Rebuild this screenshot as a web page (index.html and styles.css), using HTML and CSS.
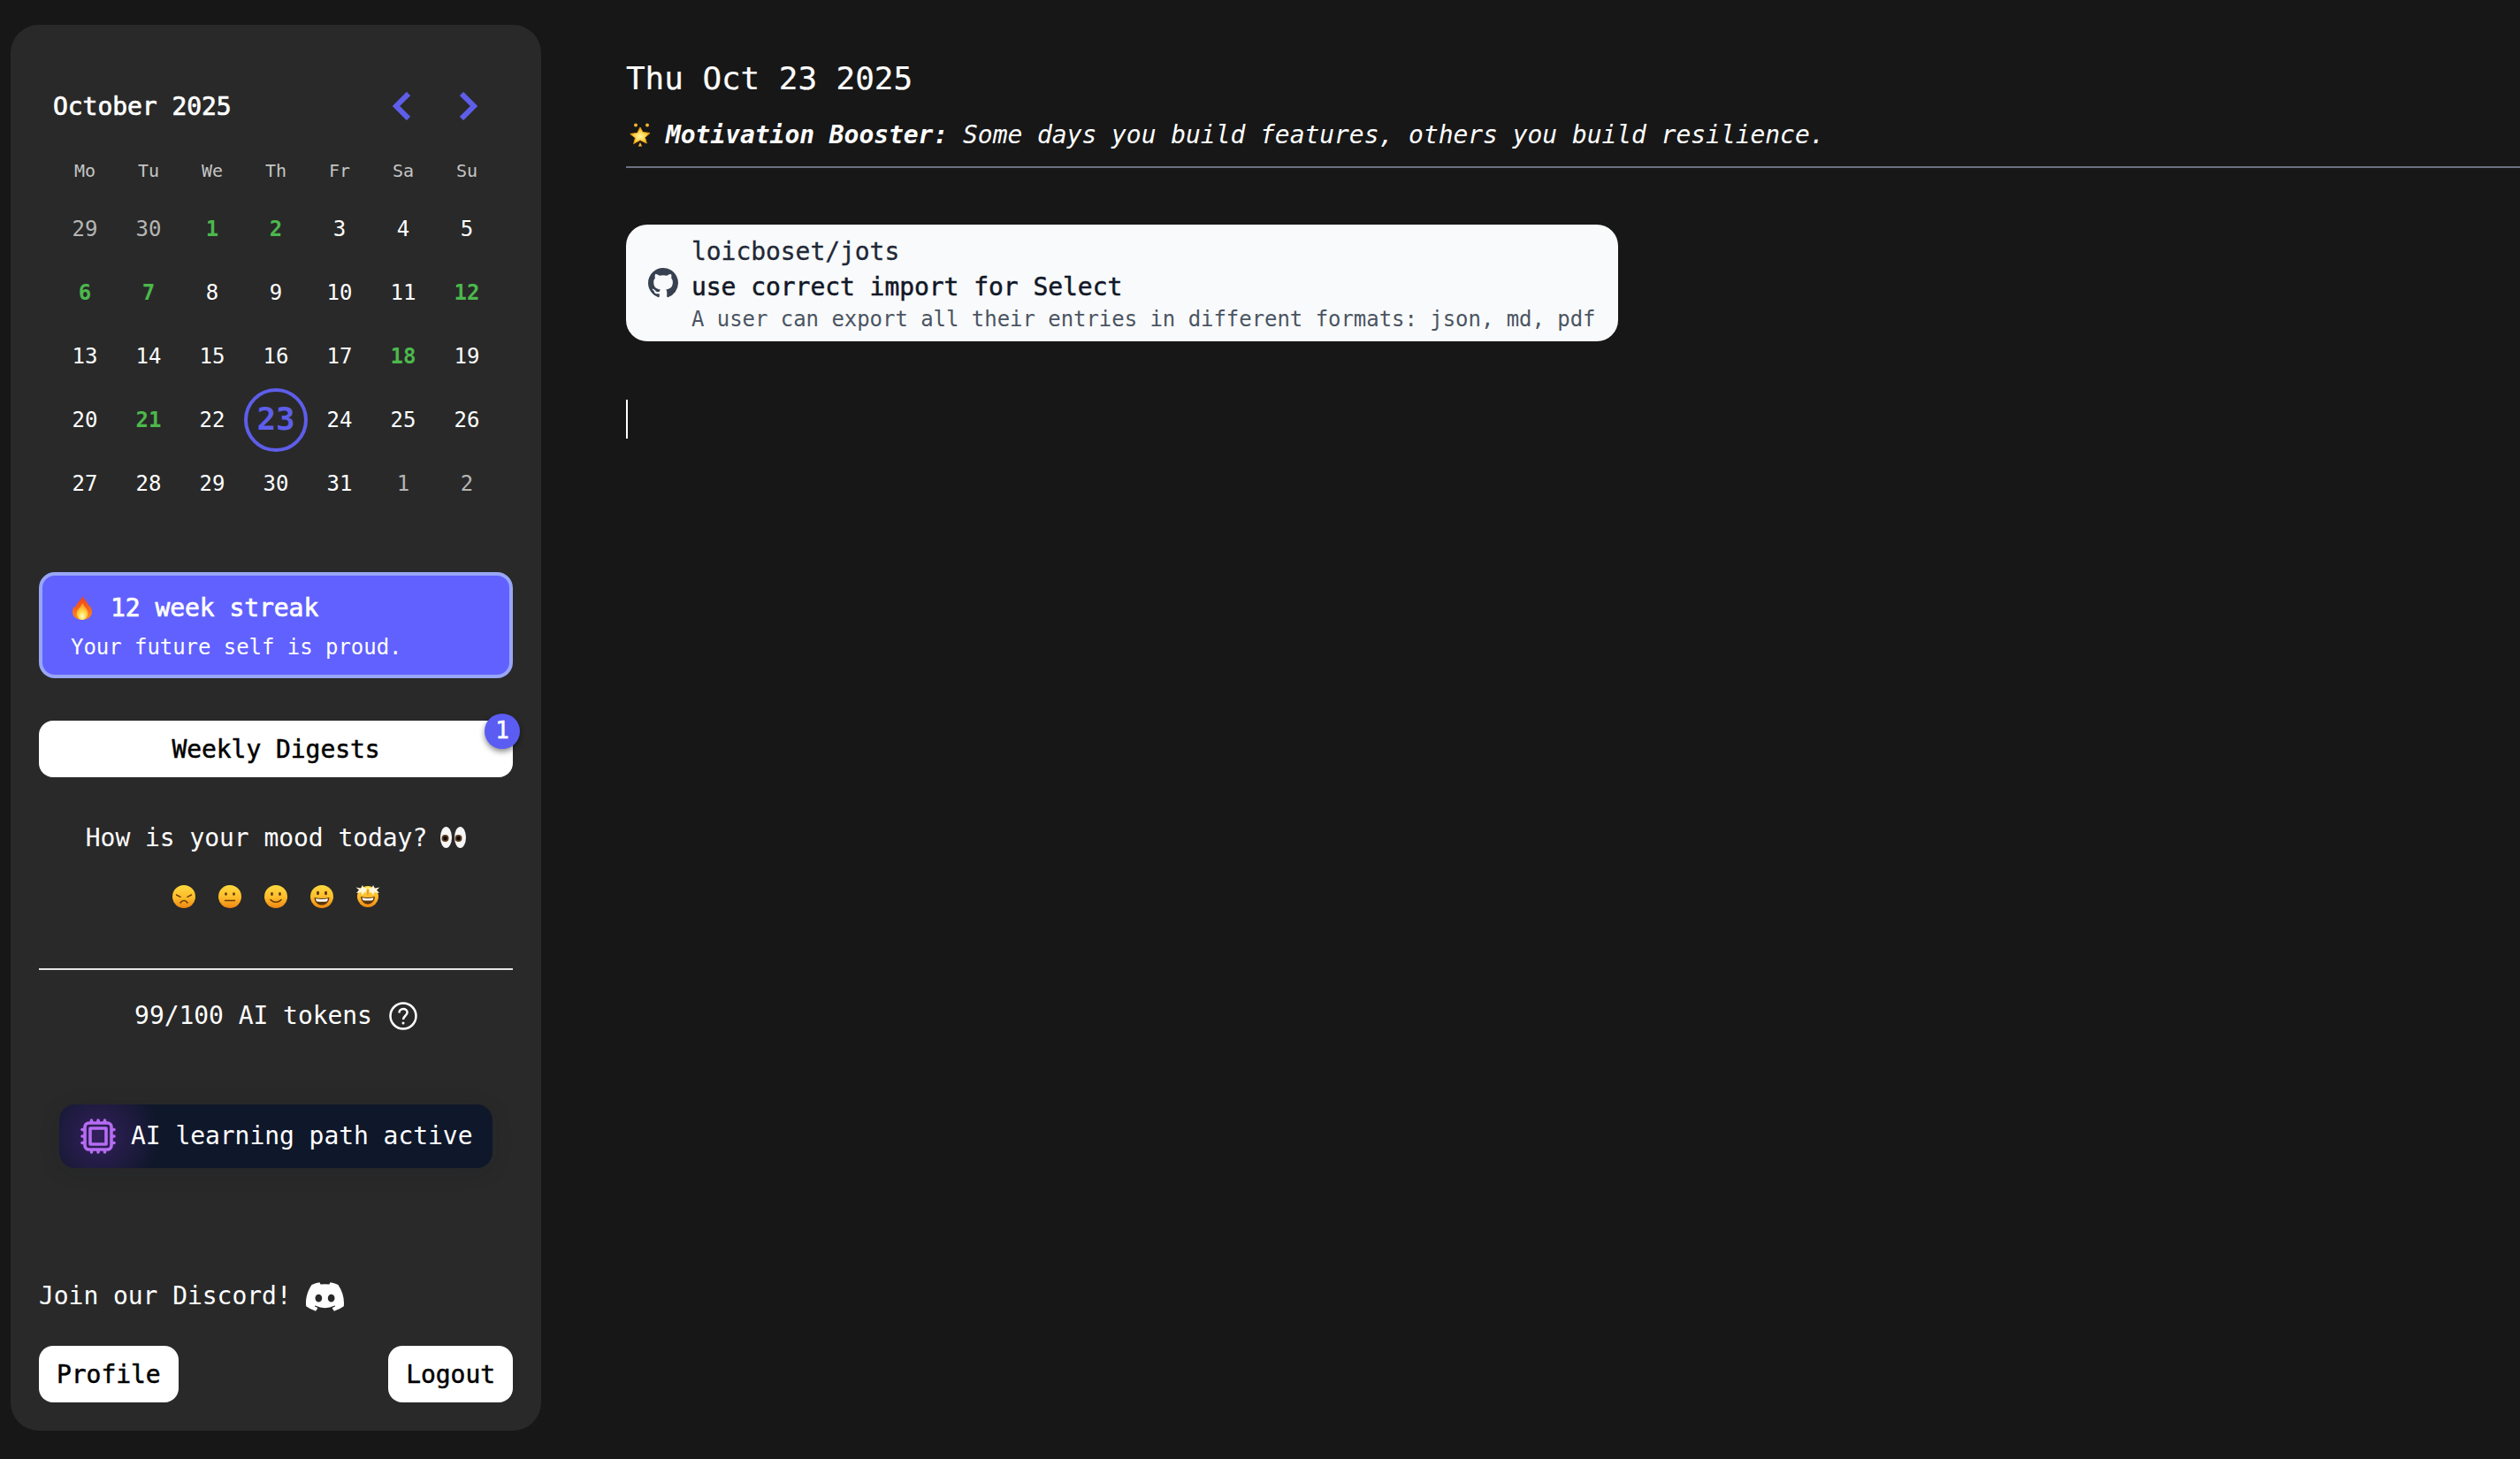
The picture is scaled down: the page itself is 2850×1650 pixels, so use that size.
FILE: index.html
```html
<!DOCTYPE html>
<html lang="en">
<head>
<meta charset="utf-8">
<title>Jots</title>
<link rel="stylesheet" href="styles.css">
</head>
<body>
<svg class="defs" width="0" height="0" aria-hidden="true">
  <defs>
    <linearGradient id="face" x1="0" y1="0" x2="0" y2="1">
      <stop offset="0" stop-color="#ffd93f"/>
      <stop offset="0.55" stop-color="#fdbb2a"/>
      <stop offset="1" stop-color="#ee8612"/>
    </linearGradient>
    <linearGradient id="flame" x1="0" y1="0" x2="0" y2="1">
      <stop offset="0" stop-color="#e8421c"/>
      <stop offset="0.6" stop-color="#f86a1c"/>
      <stop offset="1" stop-color="#fb8c20"/>
    </linearGradient>
    <radialGradient id="flameIn" cx="50%" cy="78%" r="60%">
      <stop offset="0" stop-color="#fffbd8"/>
      <stop offset="0.45" stop-color="#ffe050"/>
      <stop offset="1" stop-color="#ffa524"/>
    </radialGradient>
    <radialGradient id="star" cx="50%" cy="55%" r="55%">
      <stop offset="0" stop-color="#fff4a8"/>
      <stop offset="0.6" stop-color="#fbd03c"/>
      <stop offset="1" stop-color="#e89a16"/>
    </radialGradient>
  </defs>
</svg>
<div class="app">
  <aside class="sidebar">
    <section class="calendar">
      <header class="cal-head">
        <h2 class="cal-title">October 2025</h2>
        <div class="cal-nav">
          <svg class="chevron" viewBox="0 0 20 32"><path d="M18 2 4 16l14 14"/></svg>
          <svg class="chevron" viewBox="0 0 20 32"><path d="M2 2l14 14L2 30"/></svg>
        </div>
      </header>
      <div class="cal-grid weekdays">
        <span>Mo</span><span>Tu</span><span>We</span><span>Th</span><span>Fr</span><span>Sa</span><span>Su</span>
      </div>
      <div class="cal-grid days">
        <span class="muted">29</span><span class="muted">30</span><span class="done">1</span><span class="done">2</span><span>3</span><span>4</span><span>5</span>
        <span class="done">6</span><span class="done">7</span><span>8</span><span>9</span><span>10</span><span>11</span><span class="done">12</span>
        <span>13</span><span>14</span><span>15</span><span>16</span><span>17</span><span class="done">18</span><span>19</span>
        <span>20</span><span class="done">21</span><span>22</span><span class="today">23</span><span>24</span><span>25</span><span>26</span>
        <span>27</span><span>28</span><span>29</span><span>30</span><span>31</span><span class="muted">1</span><span class="muted">2</span>
      </div>
    </section>

    <section class="streak">
      <div class="streak-title">
        <svg class="emoji-flame" viewBox="0 0 22 27" role="img" aria-label="fire">
          <path fill="url(#flame)" d="M12 0c.5 3.500 3.800 6.200 6 9.500 1 1.500 1 2.800 1.200 3.300.4-.4.600-1.100.600-2 1.400 2.200 2.200 4.700 2.200 7.200 0 5.500-4.800 9-11 9S0 23.500 0 18c0-3 1-5.200 2.200-7 .1 1.300.5 2.300 1.100 2.800C3.500 8 9.500 5 12 0Z"/>
          <path fill="url(#flameIn)" d="M11.500 8c.8 3.500 5.200 6.200 6 10.500.7 4-2.500 8.500-6.500 8.500s-7-4.200-6.300-8.200c.6-3.600 4.800-6.300 6.800-10.800Z"/>
        </svg>
        <span>12 week streak</span>
      </div>
      <p class="streak-sub">Your future self is proud.</p>
    </section>

    <button class="btn btn-wide" type="button">
      Weekly Digests
      <span class="badge">1</span>
    </button>

    <section class="mood">
      <p class="mood-q">How is your mood today?
        <svg class="emoji-eyes" viewBox="0 0 29 24" role="img" aria-label="eyes">
          <ellipse cx="6.500" cy="12" rx="6.500" ry="12" fill="#f6f6f6"/>
          <ellipse cx="22.500" cy="12" rx="6.500" ry="12" fill="#f6f6f6"/>
          <circle cx="5.500" cy="13" r="4" fill="#5a3a20"/>
          <circle cx="20.500" cy="13" r="4" fill="#5a3a20"/>
          <circle cx="5.500" cy="13" r="2.200" fill="#0c0806"/>
          <circle cx="20.500" cy="13" r="2.200" fill="#0c0806"/>
        </svg>
      </p>
      <div class="mood-row">
        <svg class="face" viewBox="0 0 26 26" role="img" aria-label="sad">
          <circle cx="13" cy="13" r="13" fill="url(#face)"/>
          <path d="M4.500 11l4.500 2.300M21.500 11 17 13.300M9 20c2.200-3.200 5.800-3.200 8 0" class="face-line"/>
        </svg>
        <svg class="face" viewBox="0 0 26 26" role="img" aria-label="neutral">
          <circle cx="13" cy="13" r="13" fill="url(#face)"/>
          <ellipse cx="8.500" cy="10" rx="1.400" ry="1.800" fill="#5a3408"/><ellipse cx="17.500" cy="10" rx="1.400" ry="1.800" fill="#5a3408"/>
          <path d="M7.500 17.500h11" class="face-line"/>
        </svg>
        <svg class="face" viewBox="0 0 26 26" role="img" aria-label="smile">
          <circle cx="13" cy="13" r="13" fill="url(#face)"/>
          <ellipse cx="8.500" cy="10" rx="1.400" ry="1.900" fill="#5a3408"/><ellipse cx="17.500" cy="10" rx="1.400" ry="1.900" fill="#5a3408"/>
          <path d="M7 16.500c3 3.600 9 3.600 12 0" class="face-line"/>
        </svg>
        <svg class="face" viewBox="0 0 26 26" role="img" aria-label="grin">
          <circle cx="13" cy="13" r="13" fill="url(#face)"/>
          <ellipse cx="8.500" cy="9" rx="1.500" ry="2.200" fill="#5a3408"/><ellipse cx="17.500" cy="9" rx="1.500" ry="2.200" fill="#5a3408"/>
          <path d="M4.500 14c5.500 1.400 11.500 1.400 17 0-.3 5.500-4 8.500-8.500 8.500S4.800 19.500 4.500 14Z" fill="#5a3408"/>
          <path d="M6 15.200c4.500 1 9.500 1 14 0-.3 1.600-.8 2.600-1.400 3.200-3.700.6-7.500.6-11.200 0-.6-.6-1.100-1.600-1.400-3.200Z" fill="#fff"/>
        </svg>
        <svg class="face" viewBox="0 0 28 26" role="img" aria-label="star struck">
          <circle cx="14" cy="14" r="12" fill="url(#face)"/>
          <path d="M6 14c5 1.200 11 1.200 16 0-.3 5-3.800 8.500-8 8.500S6.300 19 6 14Z" fill="#5a3408"/>
          <path d="M7.500 15.300c4.200.8 8.800.8 13 0-.2 1.300-.6 2.200-1.200 2.900-3.400.5-7.200.5-10.600 0-.6-.7-1-1.600-1.200-2.900Z" fill="#fff"/>
          <path d="M8 1l1.600 3.600L14 3.500l-2.300 3.300 2.300 3-4-.7L8 12.500 6.600 9.100l-5.600.9 3-3.400L.5 3.400l5.600 1.200ZM20 1l1.900 3.600 5.600-1.200-3.500 3.200 3 3.400-5.600-.9-1.400 3.400-2-3.400-4 .7 2.300-3-2.300-3.300 4.400 1.100Z" fill="#fff6d8"/>
          <path d="M14 5.500l1.700 4h-1v3h-1.400v-3h-1Z" fill="#e89a16"/>
        </svg>
      </div>
    </section>

    <hr class="rule">

    <p class="tokens">99/100 AI tokens
      <svg class="help" viewBox="0 0 32 32"><circle cx="16" cy="16" r="14.500"/><path d="M11.500 12.500c0-2.800 2-4.500 4.600-4.500s4.500 1.700 4.500 4c0 3.800-4.600 3.700-4.600 8"/><circle class="dot" cx="16" cy="24" r="1.500"/></svg>
    </p>

    <div class="ai-pill">
      <svg class="cpu" viewBox="0 0 24 24"><path d="M8.250 3v1.500M4.500 8.250H3m18 0h-1.500M4.500 12H3m18 0h-1.500m-15 3.750H3m18 0h-1.500M8.250 19.500V21M12 3v1.500m0 15V21m3.750-18v1.500m0 15V21m-9-1.500h10.500a2.250 2.250 0 0 0 2.250-2.250V6.750a2.250 2.250 0 0 0-2.250-2.250H6.750A2.250 2.250 0 0 0 4.500 6.750v10.500a2.250 2.250 0 0 0 2.250 2.250Zm.75-12h9v9h-9v-9Z"/></svg>
      <span>AI learning path active</span>
    </div>

    <div class="side-foot">
      <p class="discord">Join our Discord!
        <svg class="discord-icon" viewBox="0 0 127.140 96.360"><path d="M107.700 8.070A105.150 105.150 0 0 0 81.470 0a72.060 72.060 0 0 0-3.360 6.830 97.680 97.680 0 0 0-29.110 0A72.370 72.370 0 0 0 45.640 0a105.890 105.890 0 0 0-26.250 8.090C2.790 32.650-1.710 56.600.54 80.210a105.730 105.730 0 0 0 32.170 16.150 77.700 77.700 0 0 0 6.890-11.110 68.420 68.420 0 0 1-10.850-5.180c.91-.66 1.800-1.340 2.660-2a75.570 75.570 0 0 0 64.320 0c.87.710 1.760 1.390 2.660 2a68.680 68.680 0 0 1-10.870 5.190 77 77 0 0 0 6.890 11.100 105.250 105.250 0 0 0 32.190-16.140c2.640-27.380-4.510-51.110-18.900-72.150ZM42.450 65.690C36.180 65.690 31 60 31 53s5-12.740 11.430-12.740S54 46 53.890 53s-5.050 12.690-11.440 12.690Zm42.240 0C78.410 65.690 73.250 60 73.250 53s5-12.740 11.440-12.740S96.230 46 96.120 53s-5.040 12.690-11.430 12.690Z"/></svg>
      </p>
      <div class="foot-btns">
        <button class="btn" type="button">Profile</button>
        <button class="btn" type="button">Logout</button>
      </div>
    </div>
  </aside>

  <main class="main">
    <h1 class="date">Thu Oct 23 2025</h1>
    <p class="booster">
      <svg class="emoji-star" viewBox="0 0 24 28" role="img" aria-label="glowing star">
        <path d="M12 6l3 5.500 8 1-5.500 5 1.800 6.500L12 20.500 4.700 24.500l1.800-6.500L.8 13.500l8-1.200Z" fill="url(#star)" stroke="#e89a16" stroke-width="1" stroke-linejoin="round"/>
        <circle cx="7" cy="3.500" r="2" fill="#f4b52a"/>
        <circle cx="20" cy="3.500" r="2" fill="#f4b52a"/>
        <path d="M12 23l2.200 4.500H9.800Z" fill="#f4b52a"/>
      </svg>
      <em><strong>Motivation Booster:</strong> Some days you build features, others you build resilience.</em>
    </p>
    <hr class="main-rule">
    <article class="commit">
      <svg class="gh" viewBox="0 0 16 16"><path d="M8 0C3.580 0 0 3.580 0 8c0 3.540 2.290 6.530 5.470 7.590.4.070.55-.17.55-.38 0-.19-.01-.82-.01-1.490-2.010.37-2.530-.49-2.690-.94-.09-.23-.48-.94-.82-1.130-.28-.15-.68-.52-.01-.53.630-.01 1.080.58 1.230.82.720 1.210 1.870.87 2.330.66.070-.52.280-.87.510-1.070-1.780-.2-3.640-.89-3.640-3.950 0-.87.310-1.590.820-2.150-.08-.2-.36-1.020.08-2.120 0 0 .67-.21 2.200.82.640-.18 1.320-.27 2-.27s1.360.09 2 .27c1.530-1.040 2.200-.82 2.200-.82.440 1.100.16 1.920.08 2.120.51.560.82 1.270.82 2.150 0 3.070-1.870 3.750-3.650 3.950.29.250.54.730.54 1.480 0 1.070-.01 1.930-.01 2.200 0 .21.150.46.550.38A8.010 8.010 0 0 0 16 8c0-4.420-3.580-8-8-8Z"/></svg>
      <div class="commit-text">
        <p class="commit-repo">loicboset/jots</p>
        <p class="commit-msg">use correct import for Select</p>
        <p class="commit-desc">A user can export all their entries in different formats: json, md, pdf</p>
      </div>
    </article>
    <div class="caret"></div>
  </main>
</div>
</body>
</html>
```
FILE: styles.css
```css
* { box-sizing: border-box; letter-spacing: -0.002em; }
html, body { margin: 0; height: 100%; }
body {
  background: #171717;
  color: #fff;
  font-family: "DejaVu Sans Mono", "Liberation Mono", monospace;
  font-size: 28px;
  line-height: 40px;
  overflow: hidden;
}
p, h1, h2 { margin: 0; font: inherit; }
.defs { position: absolute; }
.app { display: flex; height: 100vh; padding: 28px 0 32px 12px; }

.sidebar {
  width: 600px;
  flex: none;
  background: #292929;
  border-radius: 32px;
  padding: 72px 32px 32px;
  display: flex;
  flex-direction: column;
}
.calendar { padding: 0 16px; }
.cal-head { display: flex; justify-content: space-between; align-items: center; height: 40px; padding-right: 24px; }
.cal-title { font-weight: 400; -webkit-text-stroke: 0.7px #fff; padding-top: 2px; }
.cal-nav { display: flex; gap: 56px; }
.chevron { width: 20px; height: 32px; fill: none; stroke: #5e5eea; stroke-width: 6; display: block; }
.cal-grid { display: grid; grid-template-columns: repeat(7, 72px); text-align: center; }
.weekdays { font-size: 20px; line-height: 30px; color: #c4c4c4; margin-top: 38px; height: 30px; }
.days { margin-top: 15px; grid-auto-rows: 72px; font-size: 24px; line-height: 72px; }
.days .muted { color: #b5b5b5; }
.days .done { color: #4cb84c; font-weight: 700; }
.days .today {
  color: #5e5eea;
  font-size: 36px;
  font-weight: 700;
  border: 4px solid #5e5eea;
  border-radius: 50%;
  line-height: 62px;
}

.streak {
  margin-top: 64px;
  height: 120px;
  background: #6161ff;
  border: 4px solid #98a6f6;
  border-radius: 18px;
  padding: 17px 32px 0 34px;
}
.streak-title { display: flex; align-items: center; gap: 21px; -webkit-text-stroke: 0.7px #fff; height: 40px; }
.emoji-flame { width: 22px; height: 27px; margin-top: -2px; }
.streak-sub { font-size: 24px; line-height: 36px; margin: 6px 0 0 -2px; }

.btn {
  position: relative;
  background: #fff;
  color: #000;
  border: 0;
  border-radius: 16px;
  height: 64px;
  padding: 2px 20px 0;
  font: inherit;
  -webkit-text-stroke: 0.5px #000;
}
.btn-wide { margin-top: 48px; width: 100%; flex: none; }
.badge {
  position: absolute;
  top: -8px;
  right: -8px;
  width: 40px;
  height: 40px;
  border-radius: 50%;
  background: #5a5cf2;
  color: #fff;
  font-size: 26px;
  line-height: 39px;
  text-align: center;
  box-shadow: 0 3px 6px rgba(0,0,0,.45);
  -webkit-text-stroke: 0.5px #fff;
}

.mood { margin-top: 49px; text-align: center; }
.mood-q { display: flex; justify-content: center; align-items: center; gap: 15px; }
.emoji-eyes { width: 29px; height: 24px; margin-top: -2px; }
.mood-row { display: flex; justify-content: center; gap: 26px; margin-top: 32px; height: 28px; align-items: center; }
.face { width: 26px; height: 26px; }
.face:last-child { width: 28px; height: 28px; margin: -2px -1px 0; }
.face-line { fill: none; stroke: #6a3e0a; stroke-width: 1.500; stroke-linecap: round; }

.rule { border: 0; height: 2px; background: #e5e5e5; margin: 67px 0 0; width: 100%; flex: none; }

.tokens { display: flex; justify-content: center; align-items: center; gap: 19px; margin-top: 32px; height: 40px; }
.help { width: 32px; height: 32px; fill: none; stroke: #fff; stroke-width: 2.500; }
.help .dot { fill: #fff; stroke: none; }

.ai-pill {
  position: relative;
  align-self: center;
  margin-top: 80px;
  height: 72px;
  width: 490px;
  padding: 0 20px;
  display: flex;
  align-items: center;
  gap: 13px;
  border-radius: 18px;
  background: radial-gradient(circle 70px at 44px 36px, #33205c 0%, rgba(15,23,42,0) 100%), #0f172a;
  box-shadow: 0 4px 24px rgba(15,23,42,.12);
}
.cpu { width: 48px; height: 48px; fill: none; stroke: #b56cf2; stroke-width: 1.800; stroke-linecap: round; stroke-linejoin: round; flex: none; }

.side-foot { margin-top: auto; }
.discord { display: flex; align-items: center; gap: 16px; }
.discord-icon { width: 43px; height: 33px; fill: #fff; }
.foot-btns { display: flex; justify-content: space-between; margin-top: 36px; }

.main { flex: 1; padding: 41px 0 0 96px; min-width: 0; }
.date { font-size: 36px; line-height: 40px; font-weight: 400; -webkit-text-stroke: 0.2px #fff; }
.booster { margin-top: 24px; height: 40px; display: flex; align-items: center; gap: 17px; }
.emoji-star { width: 24px; height: 28px; flex: none; margin: -3px 0 0 4px; }
.booster strong { font-weight: 700; }
.main-rule { border: 0; height: 2px; background: #6b7280; margin: 15px 0 0; }

.commit {
  margin-top: 64px;
  width: 1122px;
  height: 132px;
  background: #f9fafb;
  border-radius: 24px;
  padding: 8px 0 8px 25px;
  display: flex;
  align-items: center;
  gap: 15px;
  color: #111827;
}
.gh { width: 34px; height: 34px; fill: #374151; flex: none; }
.commit-text { white-space: nowrap; padding-top: 4px; }
.commit-repo { color: #1f2937; -webkit-text-stroke: 0.3px #1f2937; }
.commit-msg { color: #111827; -webkit-text-stroke: 0.5px #111827; }
.commit-desc { color: #4b5563; font-size: 24px; line-height: 36px; margin-top: -2px; }

.caret { width: 2px; height: 44px; background: #fff; margin-top: 66px; }
```
